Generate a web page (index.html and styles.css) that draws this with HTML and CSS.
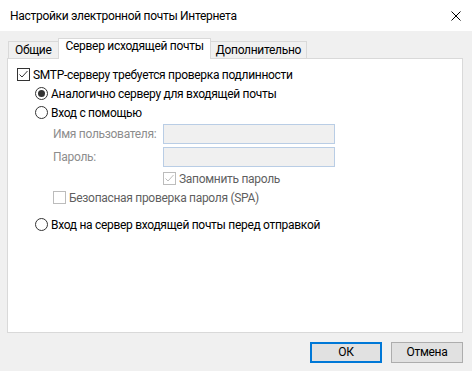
FILE: index.html
```html
<!DOCTYPE html>
<html lang="ru">
<head>
<meta charset="utf-8">
<title>Настройки электронной почты Интернета</title>
<link rel="stylesheet" href="styles.css">
</head>
<body>
<div class="window">
  <div class="titlebar">
    <span class="title">Настройки электронной почты Интернета</span>
    <svg class="close" width="10" height="10" viewBox="0 0 10 10"><path d="M0.5 0.5 L9.5 9.5 M9.5 0.5 L0.5 9.5" stroke="#000" stroke-width="1" fill="none"/></svg>
  </div>
  <div class="tabs">
    <div class="tab">Общие</div>
    <div class="tab active">Сервер исходящей почты</div>
    <div class="tab narrow">Дополнительно</div>
  </div>
  <div class="panel">
    <div class="row lvl0">
      <span class="cb"><svg width="13" height="13" viewBox="0 0 13 13"><path d="M2.5 6.5 L5 9 L10.5 3" stroke="#333" stroke-width="1" fill="none"/></svg></span>
      <span>SMTP-серверу требуется проверка подлинности</span>
    </div>
    <div class="row lvl1">
      <span class="radio on"></span>
      <span>Аналогично серверу для входящей почты</span>
    </div>
    <div class="row lvl1">
      <span class="radio"></span>
      <span>Вход с помощью</span>
    </div>
    <div class="field first">
      <span class="label">Имя пользователя:</span>
      <span class="input"></span>
    </div>
    <div class="field second">
      <span class="label">Пароль:</span>
      <span class="input"></span>
    </div>
    <div class="row remember">
      <span class="cb disabled"><svg width="13" height="13" viewBox="0 0 13 13"><path d="M2.5 6.5 L5 9 L10.5 3" stroke="#bcbcbc" stroke-width="1" fill="none"/></svg></span>
      <span class="text-dim">Запомнить пароль</span>
    </div>
    <div class="row spa">
      <span class="cb disabled"></span>
      <span class="text-dim">Безопасная проверка пароля (SPA)</span>
    </div>
    <div class="row lvl1 last">
      <span class="radio"></span>
      <span>Вход на сервер входящей почты перед отправкой</span>
    </div>
  </div>
  <div class="buttons">
    <button class="btn default">ОК</button>
    <button class="btn">Отмена</button>
  </div>
</div>
</body>
</html>
```
FILE: styles.css
```css
* { box-sizing: border-box; }
html, body { margin: 0; padding: 0; }
body {
  width: 472px;
  height: 371px;
  overflow: hidden;
  background: #f0f0f0;
  font-family: Roboto, "Noto Sans", sans-serif;
  font-size: 12px;
  letter-spacing: -0.3px;
  color: #000;
}
.titlebar {
  height: 31px;
  background: #fff;
  display: flex;
  align-items: center;
  justify-content: space-between;
  padding: 0 11px 0 10px;
}
.title { line-height: 16px; }
.close { display: block; }

.tabs {
  display: flex;
  align-items: flex-end;
  height: 20px;
  margin: 7px 0 0 8px;
}
.tab {
  height: 17px;
  border: 1px solid #d9d9d9;
  border-bottom: none;
  background: #f0f0f0;
  padding: 0 6px;
  line-height: 16px;
  margin-left: -1px;
  white-space: nowrap;
}
.tab:first-child { margin-left: 0; }
.tab.narrow { padding: 0 5px; }
.tab.active {
  height: 21px;
  margin-bottom: -1px;
  background: #fff;
  position: relative;
  z-index: 1;
  padding: 0 6px 0 7px;
  line-height: 15px;
}

.panel {
  margin: 0 9px 0 7px;
  height: 275px;
  background: #fff;
  border: 1px solid #d9d9d9;
  padding-top: 6px;
}
.row {
  display: flex;
  align-items: center;
  height: 19px;
  gap: 3px;
  white-space: nowrap;
}
.lvl0 { padding-left: 9px; }
.lvl1 { padding-left: 27px; }
.remember { padding-left: 155px; margin-top: 2px; }
.spa { padding-left: 45px; }
.last { margin-top: 8px; }

.cb {
  width: 13px;
  height: 13px;
  border: 1px solid #333;
  background: #fff;
  position: relative;
  flex: none;
}
.cb svg { position: absolute; left: -1px; top: -1px; }
.cb.disabled { border-color: #bcbcbc; }
.text-dim { color: #5f5f5f; }

.radio {
  width: 13px;
  height: 13px;
  border: 1px solid #333;
  border-radius: 50%;
  background: #fff;
  flex: none;
  display: flex;
  align-items: center;
  justify-content: center;
}
.radio.on::after {
  content: "";
  width: 7px;
  height: 7px;
  border-radius: 50%;
  background: #333;
}

.field {
  display: flex;
  align-items: center;
  height: 20px;
  padding-left: 45px;
}
.field.first { margin-top: 2px; }
.field.second { margin-top: 3px; }
.label {
  width: 110px;
  color: #8d8d8d;
  white-space: nowrap;
}
.input {
  width: 172px;
  height: 20px;
  background: #f0f0f0;
  border: 1px solid #b9cde5;
}

.buttons {
  display: flex;
  justify-content: flex-end;
  gap: 9px;
  margin: 9px 9px 0 0;
}
.btn {
  width: 72px;
  height: 21px;
  background: #e1e1e1;
  border: 1px solid #adadad;
  font-family: inherit;
  font-size: 12px;
  letter-spacing: inherit;
  color: #000;
  padding: 0;
  line-height: 17px;
}
.btn.default { border: 2px solid #0078d7; }
```
